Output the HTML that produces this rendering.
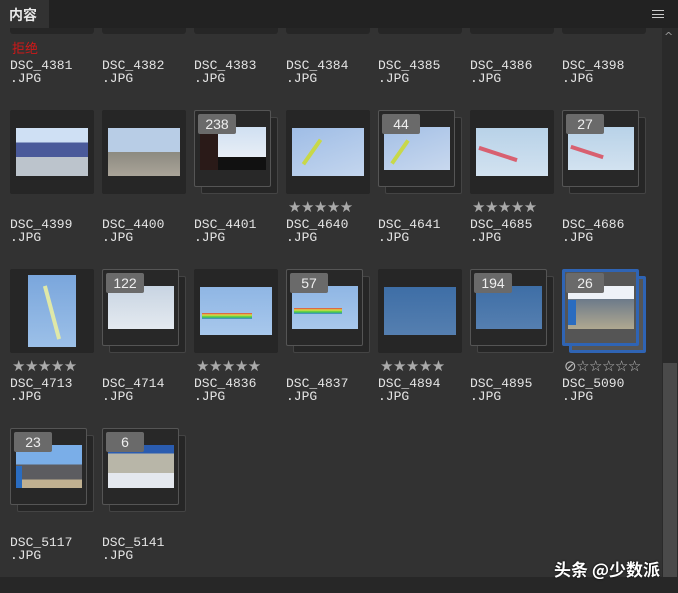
<!DOCTYPE html>
<html><head><meta charset="utf-8"><style>
*{margin:0;padding:0;box-sizing:border-box}
body{width:678px;height:593px;background:#323232;position:relative;overflow:hidden;font-family:"Liberation Mono",monospace}
.hdr{position:absolute;left:0;top:0;width:678px;height:28px;background:#222}
.tab{position:absolute;left:0;top:0;width:49px;height:28px;background:#323232;color:#e8e8e8;font:bold 14px "Liberation Sans","Noto Sans CJK SC",sans-serif;padding:5px 0 0 9px}
.menu{position:absolute;left:652px;top:10px;width:12px;height:8px;border-top:1px solid #ccc;border-bottom:1px solid #ccc}
.menu:after{content:"";position:absolute;left:0;top:2.5px;width:12px;height:1px;background:#ccc}
.sb{position:absolute;left:662px;top:28px;width:16px;height:549px;background:#2a2a2a}
.th{position:absolute;left:663px;top:363px;width:14px;height:214px;background:#4a4a4a}
.bot{position:absolute;left:0;top:577px;width:678px;height:16px;background:#272727}
.lbl{position:absolute;color:#e4e4e4;font-size:13px;line-height:12.5px;white-space:pre}
.card{position:absolute;width:84px;height:84px;background:#262626;border-radius:2px}
.fr{position:absolute;width:77px;height:77px;background:#282828;border:1px solid #555;border-radius:2px}
.bk{position:absolute;width:77px;height:77px;background:#262626;border:1px solid #444;border-radius:2px}
.img{position:absolute}
.bdg{position:absolute;width:38px;height:20px;background:#6a6a6a;color:#eee;font:14px "Liberation Sans",sans-serif;text-align:center;line-height:20px;border-radius:2px}
.st{position:absolute;color:#aaa;font-size:15px;letter-spacing:-0.5px;font-family:"DejaVu Sans",sans-serif}
.part{position:absolute;top:28px;height:6px;width:84px;background:#262626;border-radius:0 0 3px 3px}
</style></head><body>
<div class="hdr"></div><div class="tab">内容</div><div class="menu"></div>
<div class="part" style="left:10px"></div><div class="part" style="left:102px"></div><div class="part" style="left:194px"></div><div class="part" style="left:286px"></div><div class="part" style="left:378px"></div><div class="part" style="left:470px"></div><div class="part" style="left:562px"></div>
<div style="position:absolute;left:12px;top:38px;color:#d01818;font:13px 'Liberation Sans','Noto Sans CJK SC',sans-serif">拒绝</div>

<div class="lbl" style="left:10px;top:60px">DSC_4381
.JPG</div><div class="lbl" style="left:102px;top:60px">DSC_4382
.JPG</div><div class="lbl" style="left:194px;top:60px">DSC_4383
.JPG</div><div class="lbl" style="left:286px;top:60px">DSC_4384
.JPG</div><div class="lbl" style="left:378px;top:60px">DSC_4385
.JPG</div><div class="lbl" style="left:470px;top:60px">DSC_4386
.JPG</div><div class="lbl" style="left:562px;top:60px">DSC_4398
.JPG</div>

<!-- row1 -->
<div class="card" style="left:10px;top:110px"></div><div class="img" style="left:16px;top:128px;width:72px;height:48px;background:linear-gradient(#cfe0f4 0 30%,#4a5a9a 30% 60%,#bcc4cc 60%)"></div>
<div class="card" style="left:102px;top:110px"></div><div class="img" style="left:108px;top:128px;width:72px;height:48px;background:linear-gradient(#b8cde6 0 50%,#8c8a80 50%,#aaa498)"></div>
<div class="bk" style="left:201px;top:117px"></div><div class="fr" style="left:194px;top:110px"></div><div class="img" style="left:200px;top:127px;width:66px;height:43px;background:linear-gradient(#d0e0f2,#e8eef6 70%,#111 70%)"></div><div class="img" style="left:200px;top:127px;width:18px;height:43px;background:#2a1a18"></div><div class="bdg" style="left:198px;top:114px">238</div>
<div class="card" style="left:286px;top:110px"></div><div class="img" style="left:292px;top:128px;width:72px;height:48px;background:linear-gradient(160deg,#9fbde6,#c4d6ee)"></div><div class="img" style="left:297px;top:150px;width:30px;height:4px;background:#c8d848;transform:rotate(-55deg)"></div>
<div class="st" style="left:288px;top:198px">★★★★★</div>
<div class="bk" style="left:385px;top:117px"></div><div class="fr" style="left:378px;top:110px"></div><div class="img" style="left:384px;top:127px;width:66px;height:43px;background:linear-gradient(160deg,#a4c0e6,#c8d8ee)"></div><div class="img" style="left:386px;top:150px;width:28px;height:4px;background:#c8d848;transform:rotate(-55deg)"></div><div class="bdg" style="left:382px;top:114px">44</div>
<div class="card" style="left:470px;top:110px"></div><div class="img" style="left:476px;top:128px;width:72px;height:48px;background:linear-gradient(#b8d2e8,#d2e2f0)"></div><div class="img" style="left:478px;top:152px;width:40px;height:4px;background:#d86070;transform:rotate(18deg)"></div>
<div class="st" style="left:472px;top:198px">★★★★★</div>
<div class="bk" style="left:569px;top:117px"></div><div class="fr" style="left:562px;top:110px"></div><div class="img" style="left:568px;top:127px;width:66px;height:43px;background:linear-gradient(#b8d2e8,#d2e2f0)"></div><div class="img" style="left:570px;top:150px;width:34px;height:4px;background:#d86070;transform:rotate(18deg)"></div><div class="bdg" style="left:566px;top:114px">27</div>

<div class="lbl" style="left:10px;top:219px">DSC_4399
.JPG</div><div class="lbl" style="left:102px;top:219px">DSC_4400
.JPG</div><div class="lbl" style="left:194px;top:219px">DSC_4401
.JPG</div><div class="lbl" style="left:286px;top:219px">DSC_4640
.JPG</div><div class="lbl" style="left:378px;top:219px">DSC_4641
.JPG</div><div class="lbl" style="left:470px;top:219px">DSC_4685
.JPG</div><div class="lbl" style="left:562px;top:219px">DSC_4686
.JPG</div>

<!-- row2 -->
<div class="card" style="left:10px;top:269px"></div><div class="img" style="left:28px;top:275px;width:48px;height:72px;background:linear-gradient(#7aa6dc,#9cc0e8)"></div><div class="img" style="left:50px;top:285px;width:4px;height:55px;background:#dfe8a8;transform:rotate(-15deg)"></div>
<div class="st" style="left:12px;top:357px">★★★★★</div>
<div class="bk" style="left:109px;top:276px"></div><div class="fr" style="left:102px;top:269px"></div><div class="img" style="left:108px;top:286px;width:66px;height:43px;background:linear-gradient(#c8d4e2,#e4eaf0)"></div><div class="bdg" style="left:106px;top:273px">122</div>
<div class="card" style="left:194px;top:269px"></div><div class="img" style="left:200px;top:287px;width:72px;height:48px;background:linear-gradient(#8fb6e4,#a8c8ec)"></div><div class="img" style="left:202px;top:313px;width:50px;height:6px;background:linear-gradient(#d44,#dd4,#4c4,#48d)"></div>
<div class="st" style="left:196px;top:357px">★★★★★</div>
<div class="bk" style="left:293px;top:276px"></div><div class="fr" style="left:286px;top:269px"></div><div class="img" style="left:292px;top:286px;width:66px;height:43px;background:linear-gradient(#8fb6e4,#a8c8ec)"></div><div class="img" style="left:294px;top:308px;width:48px;height:6px;background:linear-gradient(#d44,#dd4,#4c4,#48d)"></div><div class="bdg" style="left:290px;top:273px">57</div>
<div class="card" style="left:378px;top:269px"></div><div class="img" style="left:384px;top:287px;width:72px;height:48px;background:linear-gradient(#3e6ea6,#557fb0)"></div>
<div class="st" style="left:380px;top:357px">★★★★★</div>
<div class="bk" style="left:477px;top:276px"></div><div class="fr" style="left:470px;top:269px"></div><div class="img" style="left:476px;top:286px;width:66px;height:43px;background:linear-gradient(#3e6ea6,#557fb0)"></div><div class="bdg" style="left:474px;top:273px">194</div>
<div class="bk" style="left:569px;top:276px;border:3px solid #2f64b4;background:#555"></div><div class="fr" style="left:562px;top:269px;border:3px solid #2f64b4;background:#555"></div><div class="img" style="left:568px;top:286px;width:66px;height:43px;background:linear-gradient(#eef2f8 0 30%,#6c7a8a 30%,#b0a890)"></div><div class="img" style="left:568px;top:300px;width:8px;height:25px;background:#2a6cc0"></div><div class="bdg" style="left:566px;top:273px">26</div>
<div class="st" style="left:564px;top:357px;color:#bbb">⊘☆☆☆☆☆</div>

<div class="lbl" style="left:10px;top:378px">DSC_4713
.JPG</div><div class="lbl" style="left:102px;top:378px">DSC_4714
.JPG</div><div class="lbl" style="left:194px;top:378px">DSC_4836
.JPG</div><div class="lbl" style="left:286px;top:378px">DSC_4837
.JPG</div><div class="lbl" style="left:378px;top:378px">DSC_4894
.JPG</div><div class="lbl" style="left:470px;top:378px">DSC_4895
.JPG</div><div class="lbl" style="left:562px;top:378px">DSC_5090
.JPG</div>

<!-- row3 -->
<div class="bk" style="left:17px;top:435px"></div><div class="fr" style="left:10px;top:428px"></div><div class="img" style="left:16px;top:445px;width:66px;height:43px;background:linear-gradient(#7aaee8 0 45%,#5c5c60 45% 80%,#c0b090 80%)"></div><div class="img" style="left:16px;top:466px;width:6px;height:22px;background:#2a6cc0"></div><div class="bdg" style="left:14px;top:432px">23</div>
<div class="bk" style="left:109px;top:435px"></div><div class="fr" style="left:102px;top:428px"></div><div class="img" style="left:108px;top:445px;width:66px;height:43px;background:linear-gradient(#2a5cb0 0 20%,#b8b6a8 20% 65%,#e4e8ee 65%)"></div><div class="bdg" style="left:106px;top:432px">6</div>

<div class="lbl" style="left:10px;top:537px">DSC_5117
.JPG</div><div class="lbl" style="left:102px;top:537px">DSC_5141
.JPG</div>

<div class="sb"></div><div class="th"></div>
<div style="position:absolute;left:664px;top:30px;color:#999;font:11px 'DejaVu Sans',sans-serif">^</div>
<div class="bot"></div>
<div style="position:absolute;left:554px;top:556px;color:#fff;font:bold 17px 'Noto Sans CJK SC',sans-serif;text-shadow:0 0 2px #000">头条 @少数派</div>
</body></html>
